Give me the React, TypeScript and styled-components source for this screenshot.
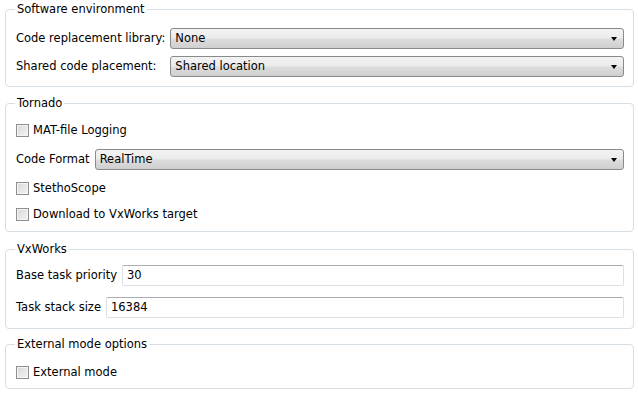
import styled, { createGlobalStyle } from "styled-components";

const GlobalStyle = createGlobalStyle`
  html, body {
    margin: 0;
    padding: 0;
    background: #ffffff;
  }
  body {
    font-family: "DejaVu Sans", "Liberation Sans", sans-serif;
    font-size: 11.5px;
    color: #000000;
  }
`;

const Page = styled.div`
  width: 638px;
  height: 395px;
  padding-top: 1px;
  box-sizing: border-box;
  background: #ffffff;
`;

const Group = styled.fieldset<{ $top: number; $pt: number; $pb: number }>`
  margin: ${(p) => p.$top}px 4px 0 5px;
  padding: ${(p) => p.$pt}px 9px ${(p) => p.$pb}px 9px;
  border: 1px solid #d5dfe5;
  border-radius: 4px;
  min-width: 0;
`;

const Legend = styled.legend`
  padding: 0 2px;
  margin-left: 0;
  line-height: 16px;
  height: 16px;
`;

const FormGrid = styled.div`
  display: grid;
  grid-template-columns: auto 1fr;
  grid-auto-rows: 28px;
  column-gap: 5px;
  align-items: center;
`;

const Row = styled.div<{ $h: number }>`
  display: flex;
  align-items: center;
  gap: 5px;
  height: ${(p) => p.$h}px;
`;

const Label = styled.span`
  white-space: nowrap;
  padding-left: 1px;
`;

const Combo = styled.div`
  position: relative;
  flex: 1;
  height: 21px;
  box-sizing: border-box;
  border: 1px solid #8a8a8a;
  border-radius: 3px;
  background: linear-gradient(#f3f3f3 0%, #ebebeb 48%, #dddddd 52%, #cfcfcf 100%);
  padding: 0 20px 0 4px;
  line-height: 19px;
  &::after {
    content: "";
    position: absolute;
    right: 6px;
    top: 8px;
    border-left: 3.5px solid transparent;
    border-right: 3.5px solid transparent;
    border-top: 4px solid #000000;
  }
`;

const TextBox = styled.div`
  flex: 1;
  height: 21px;
  box-sizing: border-box;
  border: 1px solid #dbdfe6;
  border-top-color: #abadb3;
  border-radius: 2px;
  background: #ffffff;
  padding: 0 4px;
  line-height: 19px;
`;

const CheckRow = styled.label`
  display: flex;
  align-items: center;
  gap: 4px;
  height: 26px;
`;

const Box = styled.span`
  width: 13px;
  height: 13px;
  box-sizing: border-box;
  border: 1px solid #8e8f8f;
  background: linear-gradient(135deg, #d8d8d8 0%, #f4f4f4 100%);
  box-shadow: inset 0 0 0 1px #f4f4f4;
  margin-left: 1px;
  flex: none;
`;

function Check({ text }: { text: string }) {
  return (
    <CheckRow>
      <Box />
      <span>{text}</span>
    </CheckRow>
  );
}

export default function App() {
  return (
    <Page>
      <GlobalStyle />
      <Group $top={0} $pt={7} $pb={6}>
        <Legend>Software environment</Legend>
        <FormGrid>
          <Label>Code replacement library:</Label>
          <Combo>None</Combo>
          <Label>Shared code placement:</Label>
          <Combo>Shared location</Combo>
        </FormGrid>
      </Group>

      <Group $top={8} $pt={6} $pb={4}>
        <Legend>Tornado</Legend>
        <Check text="MAT-file Logging" />
        <Row $h={32}>
          <Label>Code Format</Label>
          <Combo>RealTime</Combo>
        </Row>
        <Check text="StethoScope" />
        <Check text="Download to VxWorks target" />
      </Group>

      <Group $top={9} $pt={2} $pb={5}>
        <Legend>VxWorks</Legend>
        <Row $h={32}>
          <Label>Base task priority</Label>
          <TextBox>30</TextBox>
        </Row>
        <Row $h={32}>
          <Label>Task stack size</Label>
          <TextBox>16384</TextBox>
        </Row>
      </Group>

      <Group $top={7} $pt={7} $pb={3}>
        <Legend>External mode options</Legend>
        <Check text="External mode" />
      </Group>
    </Page>
  );
}
